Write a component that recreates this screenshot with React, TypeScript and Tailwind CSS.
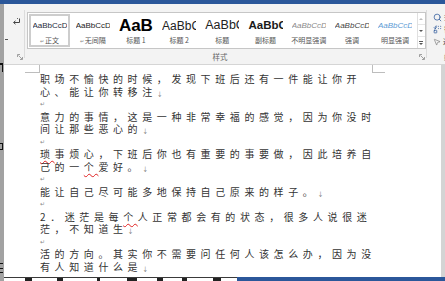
import { Search, Replace, MousePointer2 } from "lucide-react";

type Part = string | { sq: string };

interface Line {
  parts?: Part[];
  mark?: boolean;
  empty?: boolean;
}

const lines: Line[] = [
  { parts: ["职场不愉快的时候，发现下班后还有一件能让你开"] },
  { parts: ["心、能让你转移注"], mark: true },
  { empty: true },
  { parts: ["意力的事情，这是一种非常幸福的感觉，因为你没时"] },
  { parts: ["间让那些恶心的"], mark: true },
  { empty: true },
  { parts: [{ sq: "琐" }, "事烦心，下班后你也有重要的事要做，因此培养自"] },
  { parts: ["己的一", { sq: "个" }, "爱好。"], mark: true },
  { empty: true },
  { parts: ["能让自己尽可能多地保持自己原来的样子。"], mark: true },
  { empty: true },
  { parts: ["2．迷茫是每", { sq: "个" }, "人正常都会有的状态，很多人说很迷"] },
  { parts: ["茫，不知道生"], mark: true },
  { empty: true },
  { parts: ["活的方向。其实你不需要问任何人该怎么办，因为没"] },
  { parts: ["有人知道什么是"], mark: true },
];

const styles = [
  { preview: "AaBbCcDx", cls: "text-[8px] text-[#1f2d3d]", label: "正文", para: true, selected: true },
  { preview: "AaBbCcDx", cls: "text-[8px] text-[#222]", label: "无间隔", para: true },
  { preview: "AaBbC", cls: "text-[17px] font-bold text-black", label: "标题 1" },
  { preview: "AaBbC", cls: "text-[12px] text-[#222]", label: "标题 2" },
  { preview: "AaBbC", cls: "text-[12.5px] text-[#222]", label: "标题" },
  { preview: "AaBbC", cls: "text-[11.5px] font-bold text-[#1a1a1a]", label: "副标题" },
  { preview: "AaBbCcDx", cls: "text-[8px] italic text-[#8a8a8a]", label: "不明显强调" },
  { preview: "AaBbCcDx", cls: "text-[8px] italic text-[#444]", label: "强调" },
  { preview: "AaBbCcDx", cls: "text-[8px] italic text-[#5b9bd5]", label: "明显强调" },
];

function Launcher() {
  return (
    <svg width="6" height="6" viewBox="0 0 6 6">
      <path d="M0.5 3V0.5H3M5.5 3V5.5H3M1.5 1.5L5 5" stroke="#8a8a8a" strokeWidth="0.8" fill="none" />
    </svg>
  );
}

export default function App() {
  return (
    <div className="w-[445px] h-[281px] flex flex-col overflow-hidden bg-white font-['Noto_Sans_CJK_SC',sans-serif]">
      <div className="h-[4px] shrink-0 bg-[#2b579a]" />

      <div className="flex-1 min-h-0 flex">
        {/* window behind, left edge */}
        <div className="w-[4px] shrink-0 bg-[#a2a2a2] flex flex-col items-start">
          <div className="mt-[59px] w-[3px] h-[9px] border-t-2 border-r border-[#111]" />
          <div className="mt-[71px] w-[3px] h-[7px] border-t border-b border-r border-[#111]" />
          <div className="mt-[113px] w-[3px] h-[10px] border-t border-b border-[#111] flex flex-col justify-center">
            <div className="h-px bg-[#111]" />
          </div>
        </div>

        <div className="flex-1 min-w-0 flex flex-col">
          {/* ribbon */}
          <div className="h-[61px] shrink-0 bg-[#f3f3f3] border-b border-[#d5d5d5] flex">
            <div className="w-[20px] flex flex-col">
              <div className="h-[45px] flex flex-col pt-[14px]">
                <svg className="ml-[8px]" width="9" height="8" viewBox="0 0 9 8">
                  <path d="M7.5 0.5V4.5H2" stroke="#444" strokeWidth="1" fill="none" />
                  <path d="M3.5 2.8L1.5 4.5L3.5 6.2" stroke="#444" strokeWidth="1" fill="none" />
                  <path d="M5 0.5h1" stroke="#444" strokeWidth="0.8" />
                </svg>
                <div className="mt-[13px] ml-[1px] w-[3px] h-px bg-[#555]" />
              </div>
              <div className="flex-1 flex items-center justify-end pr-[1px]">
                <Launcher />
              </div>
            </div>
            <div className="w-px bg-[#dcdcdc] my-[6px]" />
            <div className="w-[2px]" />

            <div className="w-[399px] flex flex-col pt-[8px]">
              <div className="h-[37px] bg-white border border-[#c6c6c6] flex">
                {styles.map((s) => (
                  <div key={s.label} className="w-[43.2px] h-full p-px">
                    <div
                      className={`h-full flex flex-col border-2 ${
                        s.selected ? "border-[#cdcdcd]" : "border-transparent"
                      }`}
                    >
                      <div className="h-[20px] mx-[1.5px] overflow-hidden flex items-center">
                        <span
                          className={`whitespace-nowrap leading-none font-['Liberation_Sans',sans-serif] ${s.cls}`}
                        >
                          {s.preview}
                        </span>
                      </div>
                      <div className="h-[10px] flex items-center justify-center whitespace-nowrap text-[7px] leading-none text-[#555]">
                        {s.para && <span className="text-[5px] text-[#888] mr-[1px]">↵</span>}
                        {s.label}
                      </div>
                    </div>
                  </div>
                ))}
                <div className="flex-1 border-l border-[#e0e0e0] flex flex-col">
                  <div className="h-[12px] flex items-center justify-center border-b border-[#e6e6e6]">
                    <div className="w-0 h-0 border-x-[2px] border-x-transparent border-b-[2px] border-b-[#bcbcbc]" />
                  </div>
                  <div className="h-[12px] flex items-center justify-center border-b border-[#e6e6e6]">
                    <div className="w-0 h-0 border-x-[2px] border-x-transparent border-t-[2px] border-t-[#555]" />
                  </div>
                  <div className="flex-1 flex flex-col items-center justify-center gap-[1px]">
                    <div className="w-[4px] h-px bg-[#555]" />
                    <div className="w-0 h-0 border-x-[2px] border-x-transparent border-t-[2px] border-t-[#555]" />
                  </div>
                </div>
              </div>
              <div className="flex-1 flex items-center">
                <div className="flex-1 text-center text-[7.5px] leading-none text-[#666] pl-[4px] pr-[10px]">
                  样式
                </div>
                <div className="pr-[1px]">
                  <Launcher />
                </div>
              </div>
            </div>

            <div className="w-px bg-[#dcdcdc] my-[6px]" />
            <div className="flex-1 flex flex-col overflow-hidden pl-[6px]">
              <div className="h-[45px] flex flex-col pt-[9px] gap-[3px] text-[7px] leading-none text-[#333]">
                <div className="h-[9px] flex items-center gap-[2px] whitespace-nowrap">
                  <Search size={9} strokeWidth={2} className="shrink-0 text-[#2b579a]" />
                  查找
                </div>
                <div className="h-[9px] flex items-center gap-[2px] whitespace-nowrap">
                  <Replace size={9} strokeWidth={2} className="shrink-0 text-[#2b579a]" />
                  替换
                </div>
                <div className="h-[9px] flex items-center gap-[2px] whitespace-nowrap">
                  <MousePointer2 size={8} strokeWidth={1.5} className="shrink-0 text-[#555]" />
                  选择
                </div>
              </div>
              <div className="flex-1 flex items-center pl-[11px] text-[7.5px] leading-none text-[#666] whitespace-nowrap">
                编辑
              </div>
            </div>
          </div>

          {/* document */}
          <div className="flex-1 min-h-0 overflow-hidden flex">
            <div className="flex-1 bg-white flex flex-col">
              <div className="h-[8px] shrink-0 flex">
                <div className="ml-[21px] w-[15px] h-full border-r border-b border-[#bdbdbd]" />
                <div className="ml-[332px] w-[13px] h-full border-l border-b border-[#bdbdbd]" />
              </div>
              <div className="pl-[36px] text-[10px] leading-[12.5px] tracking-[4.6px] text-[#333]">
                {lines.map((l, i) =>
                  l.empty ? (
                    <div key={i} className="h-[12.5px] text-[6px] tracking-normal text-[#8a8a8a]">
                      ↵
                    </div>
                  ) : (
                    <div key={i} className="h-[12.5px] whitespace-nowrap">
                      {l.parts!.map((p, j) =>
                        typeof p === "string" ? (
                          <span key={j}>{p}</span>
                        ) : (
                          <span
                            key={j}
                            className="underline decoration-wavy decoration-[#e02020] decoration-[0.8px] underline-offset-[2px]"
                          >
                            {p.sq}
                          </span>
                        )
                      )}
                      {l.mark && <span className="text-[6px] tracking-normal text-[#777]">↓</span>}
                    </div>
                  )
                )}
              </div>
            </div>
            <div className="w-[4px] bg-[#d4d4d4]" />
          </div>

          {/* bottom edge: window behind shows through */}
          <div className="h-[4px] shrink-0 flex">
            <div className="w-[233px] flex flex-col">
              <div className="h-px bg-[#3a3a3a]" />
              <div className="flex-1 bg-white flex">
                <div className="ml-[21px] w-[7px] bg-[#222]" />
                <div className="ml-[25px] w-[6px] bg-[#222]" />
                <div className="ml-[34px] w-[3px] bg-[#222]" />
                <div className="ml-[27px] w-[10px] bg-[#222]" />
                <div className="ml-[20px] w-[6px] bg-[#222]" />
                <div className="ml-[19px] w-[5px] bg-[#222]" />
                <div className="ml-[26px] w-[8px] bg-[#222]" />
              </div>
            </div>
            <div className="flex-1 bg-[#2b579a]" />
          </div>
        </div>
      </div>
    </div>
  );
}
